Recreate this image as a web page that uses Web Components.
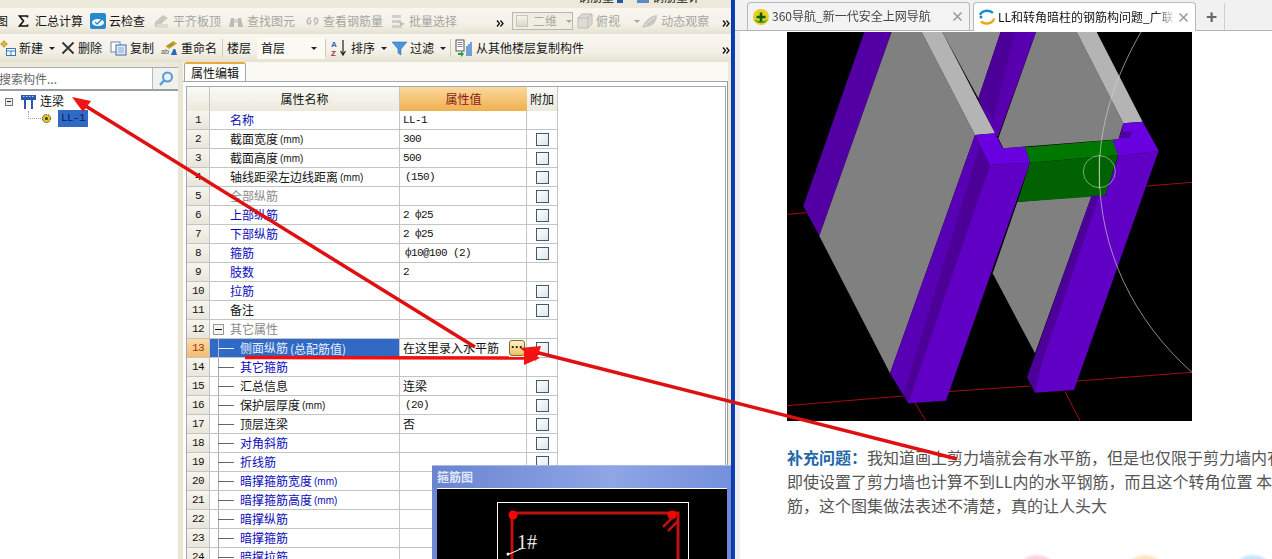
<!DOCTYPE html>
<html lang="zh">
<head>
<meta charset="utf-8">
<title>LL和转角暗柱的钢筋构问题</title>
<style>
  html, body { margin: 0; height: 559px; overflow: hidden; background: #fff; }
  body { font: 12px/1.2 "Noto Sans CJK SC", sans-serif; color: #111; }
</style>
</head>
<body>
<screen-shot>
  <gld-app slot="left">
    <top-strip></top-strip>
    <tool-bar top>
      <tool-item label="图" style="margin-left:-7px"></tool-item>
      <tool-item label="汇总计算" style="margin-left:10px"><svg slot="icon" style="margin-right:3px" width="11" height="12" viewBox="0 0 11 12"><path d="M9.5 2.5V1H1.5L5.5 6 1.5 11H9.5V9.5" fill="none" stroke="#111" stroke-width="1.6"/></svg></tool-item>
      <tool-item label="云检查" style="margin-left:7px"><svg slot="icon" width="16" height="16" viewBox="0 0 16 16"><rect width="16" height="16" rx="2" fill="#2a88cc"/><ellipse cx="8" cy="9.5" rx="6" ry="3.6" fill="#fff"/><path d="M5 9l2.2 2L12 6" fill="none" stroke="#2a88cc" stroke-width="1.4"/></svg></tool-item>
      <tool-item off label="平齐板顶" style="margin-left:9px"><svg slot="icon" width="16" height="16" viewBox="0 0 16 16"><path d="M1 14V9l8-7 5 3-6 5v4z" fill="#c8c8c0"/><path d="M3 15h11V11H3z" fill="#dcdcd4"/></svg></tool-item>
      <tool-item off label="查找图元" style="margin-left:7px"><svg slot="icon" width="16" height="15" viewBox="0 0 16 15"><path d="M1 13l2-9h3v9zM10 13V4h3l2 9z" fill="#bcbcb4"/><rect x="6" y="5" width="4" height="4" fill="#d6d6ce"/></svg></tool-item>
      <tool-item off label="查看钢筋量" style="margin-left:10px"><svg slot="icon" width="15" height="12" viewBox="0 0 15 12"><path d="M6 3C2 2 1 9 4 9c2 0 2-3 1-4M9 9c4 1 5-6 2-6-2 0-2 3-1 4" fill="none" stroke="#bcbcb4" stroke-width="1.6"/></svg></tool-item>
      <tool-item off label="批量选择" style="margin-left:8px"><svg slot="icon" width="15" height="15" viewBox="0 0 15 15"><rect x="1" y="1" width="9" height="3" fill="#d0d0c8"/><rect x="1" y="6" width="9" height="3" fill="#d0d0c8"/><rect x="1" y="11" width="9" height="3" fill="#d0d0c8"/><path d="M8 7l6 3-3 1-1 3z" fill="#bcbcb4"/></svg></tool-item>
      <more-mark style="margin-left:39px"></more-mark>
      <view-combo style="margin-left:8px"></view-combo>
      <tool-item off label="俯视" style="margin-left:4px"><svg slot="icon" width="16" height="16" viewBox="0 0 16 16"><path d="M1 5l4-4h10v10l-4 4H1z" fill="#dcdcd4" stroke="#bcbcb4"/><path d="M1 5h10v10M11 5l4-4" fill="none" stroke="#bcbcb4"/></svg></tool-item>
      <tool-item off drop label="" style="margin-left:5px"></tool-item>
      <tool-item off label="动态观察" style="margin-left:1px"><svg slot="icon" width="17" height="15" viewBox="0 0 17 15"><path d="M1 14C3 8 8 2 16 1c0 7-5 12-11 12z" fill="#c8c8c0"/><path d="M4 12c3-4 6-7 10-9" stroke="#ecebe2" fill="none"/></svg></tool-item>
      <more-mark style="margin-left:13px"></more-mark>
    </tool-bar>
    <tool-bar tall>
      <tool-item drop label="新建" style="margin-left:0"><svg slot="icon" width="16" height="16" viewBox="0 0 16 16"><path d="M3 1h2v2h2v2H5v2H3V5H1V3h2z" fill="#e8b820" stroke="#a88010" stroke-width=".5"/><rect x="6.500" y="8.500" width="9" height="7" fill="#fff" stroke="#3a78b8"/><path d="M6.500 11h9M11 11v4.500" stroke="#3a78b8"/></svg></tool-item>
      <tool-item label="删除" style="margin-left:6px"><svg slot="icon" width="14" height="14" viewBox="0 0 14 14"><path d="M1.500 1.500l11 11M12.500 1.500l-11 11" stroke="#333" stroke-width="1.800"/></svg></tool-item>
      <tool-item label="复制" style="margin-left:8px"><svg slot="icon" width="17" height="15" viewBox="0 0 17 15"><rect x="1" y="1" width="9" height="10" fill="#fff" stroke="#6a86a8"/><rect x="6" y="4" width="10" height="10" fill="#e4eefa" stroke="#3a68a8"/><path d="M8 7h6M8 9h6M8 11h6" stroke="#8aa4c4"/></svg></tool-item>
      <tool-item label="重命名" style="margin-left:7px"><svg slot="icon" width="17" height="16" viewBox="0 0 19 18"><path d="M5 7l9-6 4 3-9 6z" fill="#d8a830"/><path d="M7 7l6-4M9 8l6-4" stroke="#6a8a30"/><path d="M11 17l3-7h2l2 7z" fill="#2a68b8"/><text x="0" y="16" font-size="8" font-family="Liberation Sans" fill="#555">ab</text></svg></tool-item>
      <tool-sep style="margin-left:5px"></tool-sep>
      <tool-item label="楼层" style="margin-left:1px"></tool-item>
      <floor-select style="margin-left:6px"></floor-select>
      <tool-sep style="margin-left:0"></tool-sep>
      <tool-item drop label="排序" style="margin-left:5px"><svg slot="icon" width="17" height="18" viewBox="0 0 17 18"><text x="0" y="8" font-size="8" font-family="Liberation Sans" font-weight="bold" fill="#2a68b8">A</text><text x="0" y="17" font-size="8" font-family="Liberation Sans" font-weight="bold" fill="#a83040">Z</text><path d="M12 1v14M9.500 12l2.500 4 2.500-4" fill="none" stroke="#222" stroke-width="1.200"/></svg></tool-item>
      <tool-item drop label="过滤" style="margin-left:5px"><svg slot="icon" width="15" height="15" viewBox="0 0 15 15"><path d="M0 1h15L9 8v6L6 12V8z" fill="#4a94dc" stroke="#2a68a8" stroke-width=".5"/></svg></tool-item>
      <tool-sep style="margin-left:4px"></tool-sep>
      <tool-item label="从其他楼层复制构件" style="margin-left:4px"><svg slot="icon" width="18" height="18" viewBox="0 0 18 18"><rect x="1" y="1" width="8" height="11" fill="#fff" stroke="#555"/><path d="M2.500 3.500h5M2.500 5.500h5M2.500 7.500h5" stroke="#888"/><path d="M3 14h3v-2l3 3-3 3v-2H3z" fill="#2a9a40"/><path d="M12 7v10M14 5v12M16 3v14" stroke="#2a78c8" stroke-width="1.300"/></svg></tool-item>
      <more-mark style="margin-left:auto;margin-right:1px"></more-mark>
    </tool-bar>
    <work-area>
      <tree-pane slot="side"></tree-pane>
      <prop-panel slot="main">
        <prop-row n="1" kind="link" name="名称" value="LL-1" nobox></prop-row>
        <prop-row n="2" name="截面宽度" unit="(mm)" value="300"></prop-row>
        <prop-row n="3" name="截面高度" unit="(mm)" value="500"></prop-row>
        <prop-row n="4" name="轴线距梁左边线距离" unit="(mm)" value=" (150)"></prop-row>
        <prop-row n="5" kind="mute" name="全部纵筋"></prop-row>
        <prop-row n="6" kind="link" name="上部纵筋" value="2 ф25"></prop-row>
        <prop-row n="7" kind="link" name="下部纵筋" value="2 ф25"></prop-row>
        <prop-row n="8" kind="link" name="箍筋" value=" ф10@100 (2)"></prop-row>
        <prop-row n="9" kind="link" name="肢数" value="2" nobox></prop-row>
        <prop-row n="10" kind="link" name="拉筋"></prop-row>
        <prop-row n="11" name="备注"></prop-row>
        <prop-row n="12" kind="mute" name="其它属性" group nobox></prop-row>
        <prop-row n="13" child selected name="侧面纵筋" unit="(总配筋值)" value="在这里录入水平筋"></prop-row>
        <prop-row n="14" child kind="link" name="其它箍筋" nobox></prop-row>
        <prop-row n="15" child name="汇总信息" value="连梁"></prop-row>
        <prop-row n="16" child name="保护层厚度" unit="(mm)" value=" (20)"></prop-row>
        <prop-row n="17" child name="顶层连梁" value="否"></prop-row>
        <prop-row n="18" child kind="link" name="对角斜筋"></prop-row>
        <prop-row n="19" child kind="link" name="折线筋"></prop-row>
        <prop-row n="20" child kind="link" name="暗撑箍筋宽度" unit="(mm)" nobox></prop-row>
        <prop-row n="21" child kind="link" name="暗撑箍筋高度" unit="(mm)" nobox></prop-row>
        <prop-row n="22" child kind="link" name="暗撑纵筋" nobox></prop-row>
        <prop-row n="23" child kind="link" name="暗撑箍筋" nobox></prop-row>
        <prop-row n="24" child kind="link" name="暗撑拉筋" nobox></prop-row>
      </prop-panel>
    </work-area>
    <rebar-dialog></rebar-dialog>
  </gld-app>
  <browser-pane slot="right">
    <browser-tab slot="tabs" label="360导航_新一代安全上网导航" kind="plus"></browser-tab>
    <browser-tab slot="tabs" label="LL和转角暗柱的钢筋构问题_广联" kind="swirl" active></browser-tab>
    <cad-view></cad-view>
    <question-text></question-text>
    <deco-dots></deco-dots>
  </browser-pane>
  <note-arrows slot="over"></note-arrows>
</screen-shot>

<script>
class ScreenShot extends HTMLElement {
  constructor() {
    super();
    this.attachShadow({mode: 'open'}).innerHTML = `
      <style>
        :host { display: flex; position: relative; width: 1272px; height: 559px; overflow: hidden; }
        #left { display: block; width: 731px; flex: none; }
        #bar { width: 4px; flex: none; background: linear-gradient(90deg, #0a34a8, #0b46c4); }
      </style>
      <div id="left"><slot name="left"></slot></div>
      <div id="bar"></div>
      <slot name="right"></slot>
      <slot name="over"></slot>`;
  }
}

class GldApp extends HTMLElement {
  constructor() {
    super();
    this.attachShadow({mode: 'open'}).innerHTML = `
      <style>
        :host { display: flex; flex-direction: column; position: relative; width: 731px; height: 559px; overflow: hidden; background: #ece9d8; }
      </style>
      <slot></slot>`;
  }
}

class TopStrip extends HTMLElement {
  constructor() {
    super();
    this.attachShadow({mode: 'open'}).innerHTML = `
      <style>
        :host { display: flex; height: 8px; flex: none; overflow: hidden; background: #ece9da; color: #222; }
        span { display: block; margin-top: -11px; line-height: 16px; white-space: nowrap; }
        i { width: 8px; height: 3px; background: #2a58a8; display: block; }
      </style>
      <span style="margin-left:578px">钢筋量</span>
      <i style="margin-left:3px;width:6px"></i>
      <i style="margin-left:14px;width:12px;background:#5a88c8"></i>
      <span style="margin-left:3px">钢筋量计</span>`;
  }
}

class ToolBar extends HTMLElement {
  constructor() {
    super();
    this.attachShadow({mode: 'open'}).innerHTML = `
      <style>
        :host { display: flex; align-items: center; height: 26px; flex: none; white-space: nowrap;
                background: linear-gradient(#f8f6ef, #f3f1e8 60%, #e6e2d2); color: #111; }
        :host([tall]) { height: 28px; }
      </style>
      <slot></slot>`;
  }
}

class ToolItem extends HTMLElement {
  constructor() {
    super();
    const off = this.hasAttribute('off');
    this.attachShadow({mode: 'open'}).innerHTML = `
      <style>
        :host { display: flex; align-items: center; gap: 3px; color: ${off ? '#a6a69e' : '#151515'}; }
        i { border: 3px solid transparent; border-top: 3px solid ${off ? '#a6a69e' : '#222'}; border-bottom: 0; margin-left: 3px; }
        slot { display: flex; }
      </style>
      <slot name="icon"></slot>
      <span>${this.getAttribute('label') || ''}</span>
      ${this.hasAttribute('drop') ? '<i></i>' : ''}`;
  }
}

class ToolSep extends HTMLElement {
  constructor() {
    super();
    this.attachShadow({mode: 'open'}).innerHTML = `
      <style>:host { display: block; width: 1px; height: 18px; background: #cfcbb8; }</style>`;
  }
}

class MoreMark extends HTMLElement {
  constructor() {
    super();
    this.attachShadow({mode: 'open'}).innerHTML = `
      <style>:host { display: block; width: 8px; height: 7px; margin-top: -6px; }</style>
      <svg width="8" height="7" viewBox="0 0 8 7"><path d="M1 .5L3.500 3.500 1 6.500M4.500 .5L7 3.500 4.500 6.500" fill="none" stroke="#111" stroke-width="1.300"/></svg>`;
  }
}

class ViewCombo extends HTMLElement {
  constructor() {
    super();
    this.attachShadow({mode: 'open'}).innerHTML = `
      <style>
        :host { display: flex; align-items: center; width: 61px; height: 18px; box-sizing: border-box; border: 1px solid #b8b8ae; color: #aaa9a0; background: #f0eee4; }
        b { width: 13px; height: 10px; margin: 0 5px 0 3px; background: linear-gradient(#f4f4ec, #d8d8cc); border: 1px solid #c8c8bc; }
        i { margin-left: 9px; border: 3px solid transparent; border-top-color: #a6a69e; border-bottom: 0; }
      </style>
      <b></b><span>二维</span><i></i>`;
  }
}

class FloorSelect extends HTMLElement {
  constructor() {
    super();
    this.attachShadow({mode: 'open'}).innerHTML = `
      <style>
        :host { display: flex; align-items: center; width: 68px; height: 22px; box-sizing: border-box; padding: 0 8px 0 4px; background: #faf9f4; justify-content: space-between; }
        i { border: 3px solid transparent; border-top-color: #222; border-bottom: 0; }
      </style>
      <span>首层</span><i></i>`;
  }
}

class WorkArea extends HTMLElement {
  constructor() {
    super();
    this.attachShadow({mode: 'open'}).innerHTML = `
      <style>
        :host { display: flex; flex: 1; min-height: 0; }
        #gap { width: 5px; flex: none; background: #e9e6d6; }
      </style>
      <slot name="side"></slot><div id="gap"></div><slot name="main"></slot>`;
  }
}

class TreePane extends HTMLElement {
  constructor() {
    super();
    this.attachShadow({mode: 'open'}).innerHTML = `
      <style>
        :host { display: block; width: 178px; flex: none; background: #fff; padding-top: 5px; box-sizing: border-box; background-clip: content-box; }
        #search { display: flex; height: 24px; border-top: 1px solid #aab; border-bottom: 2px solid #9aa0a8; box-sizing: border-box; }
        #search span { flex: 1; color: #666; line-height: 21px; margin-left: -1px; border-right: 1px solid #b4b8c0; }
        #search b { width: 25px; display: flex; align-items: center; justify-content: center; background: #f2f2ec; }
        ul { list-style: none; margin: 0; padding: 0; }
        li { display: flex; align-items: center; height: 17px; }
        #top { padding: 2px 0 0 5px; gap: 0; }
        #box { width: 8px; height: 8px; border: 1px solid #777; box-sizing: border-box; display: flex; align-items: center; justify-content: center; background: #eee; }
        #box::after { content: ""; width: 4px; height: 1px; background: #222; }
        #leaf { padding-left: 28px; }
        #dots { width: 12px; height: 7px; border: 0 dotted #999; border-width: 0 0 1px 1px; margin-top: -8px; }
        #sel { background: #316ac5; color: #0a1a60; font: 11px "Liberation Mono", monospace; letter-spacing: -.6px; width: 30px; height: 17px; line-height: 17px; padding-left: 3px; box-sizing: border-box; margin-left: 6px; }
      </style>
      <div id="search"><span>搜索构件...</span><b><svg width="16" height="16" viewBox="0 0 16 16"><circle cx="9.500" cy="6" r="4.500" fill="#e4f0fa" stroke="#5a9ad0" stroke-width="2"/><path d="M6 9.500L2 14" stroke="#5a9ad0" stroke-width="2.400"/></svg></b></div>
      <ul>
        <li id="top"><span id="box"></span>
          <svg style="margin-left:8px" width="15" height="14" viewBox="0 0 15 14"><rect width="15" height="5" fill="#2a58b0"/><path d="M2 1.500h11" stroke="#bcd" stroke-dasharray="1.500 1.500"/><path d="M4 5v9M11 5v9" stroke="#2a58b0" stroke-width="2"/></svg>
          <span style="margin-left:4px">连梁</span></li>
        <li id="leaf"><span id="dots"></span>
          <svg width="11" height="11" viewBox="0 0 11 11" style="margin-left:0"><circle cx="5.500" cy="5.500" r="4" fill="#e4c820" stroke="#333" stroke-dasharray="1.500 1"/><circle cx="5.500" cy="5.500" r="1.500" fill="#333"/></svg>
          <span id="sel">LL-1</span></li>
      </ul>`;
  }
}

class PropPanel extends HTMLElement {
  constructor() {
    super();
    this.attachShadow({mode: 'open'}).innerHTML = `
      <style>
        :host { display: flex; flex-direction: column; width: 545px; flex: none; min-height: 0; }
        #tabs { height: 19px; flex: none; padding-left: 1px; display: flex; background: #faf9f4; }
        #tab { width: 62px; height: 20px; box-sizing: border-box; text-align: center; line-height: 18px; background: #fff; border: 1px solid #a8a8a0; border-bottom: 0; border-top: 2px solid #e8a840; border-radius: 3px 3px 0 0; }
        #page { flex: 1; min-height: 0; background: #fff; border-top: 1px solid #a0a4a8; border-right: 1px solid #9a9a9a; padding: 4px 1px 0 3px; }
        #grid { height: 100%; border: 1px solid #a0a8b4; border-bottom: 0; }
        #head { display: grid; grid-template-columns: 23px 190px 127px 31px; height: 24px; line-height: 23px; text-align: center; }
        #head div { border-right: 1px solid #c4c4c4; box-sizing: border-box; background: linear-gradient(#fafaf6, #ece9dc); }
        #head .on { background: linear-gradient(#fbd89c, #f0b050); color: #8a1a1a; border: 0; }
        #rows { width: 371px; }
      </style>
      <div id="tabs"><div id="tab">属性编辑</div></div>
      <div id="page"><div id="grid">
        <div id="head" style="width:371px"><div></div><div>属性名称</div><div class="on">属性值</div><div>附加</div></div>
        <div id="rows"><slot></slot></div>
      </div></div>`;
  }
}

class PropRow extends HTMLElement {
  constructor() {
    super();
    const sel = this.hasAttribute('selected');
    const child = this.hasAttribute('child');
    const group = this.hasAttribute('group');
    const kind = this.getAttribute('kind');
    const colour = sel ? '#e8eefc' : kind === 'link' ? '#0a0ab8' : kind === 'mute' ? '#8a8a8a' : '#141414';
    const unit = this.getAttribute('unit');
    const raw = this.getAttribute('value') || '';
    const value = raw.trim();
    const cjk = /[\u4e00-\u9fff]/.test(value);
    const unitCjk = unit && /[\u4e00-\u9fff]/.test(unit);
    this.attachShadow({mode: 'open'}).innerHTML = `
      <style>
        :host { display: grid; grid-template-columns: 23px 190px 127px 31px; height: 19px; line-height: 18px; }
        div { box-sizing: border-box; border-bottom: 1px solid #c4c4c4; border-right: 1px solid #c4c4c4; white-space: pre; overflow: hidden; }
        #n { font: 11px/18px "Liberation Mono", monospace; letter-spacing: -.6px; text-align: center; background: ${sel ? 'linear-gradient(#fcdca4,#f4bc70)' : 'linear-gradient(#f6f5ee,#e8e6da)'}; color: ${sel ? '#a03010' : '#111'}; }
        #name { display: flex; align-items: center; color: ${colour}; background: ${sel ? '#316ac5' : '#fff'}; padding-left: ${child ? 30 : 20}px; position: relative; }
        #name small { font: ${unitCjk ? '12px "Noto Sans CJK SC", sans-serif' : '10px "Liberation Sans", sans-serif'}; margin-left: 2px; }
        #tick { position: absolute; left: 8px; top: 0; bottom: -1px; width: 16px; }
        #tick::before { content: ""; position: absolute; left: 0; top: 0; bottom: 0; width: 1px; background: ${sel ? '#a0b8e8' : '#aaa'}; }
        #tick::after { content: ""; position: absolute; left: 0; right: 0; top: 9px; height: 1px; background: ${sel ? '#e8eefc' : '#666'}; }
        #minus { position: absolute; left: 3px; top: 4px; width: 11px; height: 11px; box-sizing: border-box; border: 1px solid #999; background: #f4f4f0; display: flex; align-items: center; justify-content: center; }
        #minus::after { content: ""; width: 7px; height: 1px; background: #111; }
        #val { padding-left: ${raw !== value ? 5 : 3}px; color: #111; display: flex; align-items: center; justify-content: space-between; }
        #val span { ${cjk ? '' : 'font: 11px/18px "Liberation Mono", monospace; letter-spacing: -.6px;'} }
        #dots { width: 16px; height: 16px; margin-right: 1px; box-sizing: border-box; border: 1px solid #8a6a20; border-radius: 3px; background: linear-gradient(#fff2c8, #f0c060); font: bold 12px/13px "Liberation Sans", sans-serif; text-align: center; color: #111; }
        #add { display: flex; align-items: center; justify-content: center; background: #fff; }
        #add i { display: block; width: 13px; height: 13px; box-sizing: border-box; border: 1px solid #3e5c72; background: linear-gradient(135deg, #fff, #dfe6e6); }
      </style>
      <div id="n">${this.getAttribute('n')}</div>
      <div id="name">
        ${child ? '<span id="tick"></span>' : ''}
        ${group ? '<span id="minus"></span>' : ''}
        <span>${this.getAttribute('name')}</span>${unit ? `<small>${unit}</small>` : ''}
      </div>
      <div id="val"><span>${value}</span>${sel ? '<b id="dots">···</b>' : ''}</div>
      <div id="add">${this.hasAttribute('nobox') ? '' : '<i></i>'}</div>`;
  }
}

class RebarDialog extends HTMLElement {
  constructor() {
    super();
    this.attachShadow({mode: 'open'}).innerHTML = `
      <style>
        :host { display: block; position: absolute; left: 432px; top: 465px; width: 299px; height: 94px; box-sizing: border-box;
                padding: 0 4px 0 5px; background: #7088d4; border-top: 1px solid #a8b8e8; }
        #title { height: 22px; line-height: 22px; font-weight: bold; color: #dfe6f8; background: linear-gradient(90deg, #6a84d0, #8ea6e6 60%, #7490dc); margin: 0 -4px 0 -5px; padding-left: 5px; }
        svg { display: block; background: #000; border-top: 1px solid #fff; }
      </style>
      <div id="title">箍筋图</div>
      <svg width="290" height="71" viewBox="0 0 290 71">
        <rect x="60.500" y="13.500" width="191" height="70" fill="none" stroke="#fff"/>
        <path d="M75 24H241V80M75 24V80" fill="none" stroke="#c01010" stroke-width="3"/>
        <circle cx="76" cy="26" r="4.500" fill="#f00"/><circle cx="235" cy="26" r="4.500" fill="#f00"/>
        <path d="M226 38l10-10M231 42l10-10" stroke="#c01010" stroke-width="2.500"/>
        <path d="M70 66l16-7" stroke="#fff"/><circle cx="71" cy="65" r="1.500" fill="#fff"/>
        <text x="80" y="60" fill="#e8e8e8" font-family="Liberation Serif" font-size="20">1#</text>
      </svg>`;
  }
}

class BrowserPane extends HTMLElement {
  constructor() {
    super();
    this.attachShadow({mode: 'open'}).innerHTML = `
      <style>
        :host { display: flex; flex-direction: column; flex: 1; min-width: 0; background: #fff; }
        #strip { display: flex; align-items: flex-end; height: 31px; flex: none; box-sizing: border-box; padding-left: 12px; gap: 3px; background: #f1f1f1; border-bottom: 1px solid #b4b4b4; }
        #plus { display: flex; align-items: center; justify-content: center; width: 25px; height: 27px; font: bold 19px/1 "Liberation Sans", sans-serif; color: #666; border-right: 1px solid #d0d0d0; }
        #page { flex: 1; min-height: 0; overflow: hidden; padding: 1px 0 0 47px; border-left: 5px solid #efefef; box-sizing: border-box; width: 537px; }
      </style>
      <div id="strip"><slot name="tabs"></slot><div id="plus">+</div></div>
      <div id="page"><slot></slot></div>`;
  }
}

class BrowserTab extends HTMLElement {
  constructor() {
    super();
    const active = this.hasAttribute('active');
    const icon = this.getAttribute('kind') === 'plus'
      ? `<svg width="16" height="16" viewBox="0 0 16 16"><circle cx="8" cy="8" r="8" fill="#e8d020"/><path d="M1 10a8 8 0 0 0 14 0c-3 3-10 3-14 0z" fill="#3a9a28"/><path d="M8 3.500v9M3.500 8h9" stroke="#0e5a10" stroke-width="2.600"/></svg>`
      : `<svg width="16" height="16" viewBox="0 0 16 16"><path d="M1 6a7.500 6 0 0 1 13-2" fill="none" stroke="#1a88d0" stroke-width="2.400"/><path d="M15 9.500a7.500 6 0 0 1-13 3" fill="none" stroke="#e8a820" stroke-width="2.400"/><circle cx="2" cy="8" r="1.500" fill="#1a88d0"/></svg>`;
    this.attachShadow({mode: 'open'}).innerHTML = `
      <style>
        :host { display: flex; align-items: center; width: 223px; box-sizing: border-box; padding: 0 7px 0 5px; gap: 3px;
                border: 1px solid #b8b8b8; border-bottom: 0; border-radius: 4px 4px 0 0; margin-bottom: ${active ? '-1px' : '0'};
                height: ${active ? '29px' : '28px'}; background: ${active ? '#fff' : '#f3f3f3'}; color: ${active ? '#111' : '#444'}; }
        span { flex: 1; white-space: nowrap; overflow: hidden; font-size: 12px; -webkit-mask-image: linear-gradient(90deg, #000 88%, transparent); mask-image: linear-gradient(90deg, #000 88%, transparent); }
        svg { flex: none; }
      </style>
      ${icon}<span>${this.getAttribute('label')}</span>
      <svg width="9" height="9" viewBox="0 0 9 9"><path d="M.5 .5l8 8M8.500 .5l-8 8" stroke="#999" stroke-width="1.500"/></svg>`;
  }
}

class CadView extends HTMLElement {
  constructor() {
    super();
    this.attachShadow({mode: 'open'}).innerHTML = `
      <style>:host { display: block; width: 405px; height: 389px; } svg { display: block; background: #000; }</style>
      <svg width="405" height="389" viewBox="21 6 1215 1167">
        <g stroke="#c81010" stroke-width="2.500" fill="none">
          <path d="M21 553L80 548M1100 468L1236 457M21 1127L370 1098M500 1085L750 1068M890 1053L1236 1027M405 1118L437 1172M855 1085L900 1172"/>
        </g>
        <polygon points="487,6 662,6 595,205" fill="#8c8c8c"/>
        <polygon points="768,6 890,6 1030,280 1015,328 670,355 655,325" fill="#808080"/>
        <polygon points="712,516 935,497 765,970 638,730" fill="#808080"/>
        <polygon points="662,6 768,6 655,318 648,318 595,208" fill="#5800b0"/>
        <polygon points="662,6 705,6 640,270 595,208" fill="#4c0098"/>
        <polygon points="890,6 950,6 1088,275 1030,280" fill="#b4b4b4"/>
        <polygon points="253,6 335,6 118,618 70,528" fill="#5200a4"/>
        <polygon points="335,6 425,6 585,315 330,1030 118,618" fill="#808080"/>
        <polygon points="425,6 487,6 645,310 585,315" fill="#b4b4b4"/>
        <polygon points="735,352 998,330 1015,375 750,398" fill="#007800"/>
        <polygon points="750,398 1015,375 975,497 712,516" fill="#006200"/>
        <polygon points="1015,378 1136,362 882,1080 765,1088 742,1042 935,497 975,497" fill="#6000c4"/>
        <polygon points="935,497 958,497 785,1000 765,1088 742,1042" fill="#4c0098"/>
        <polygon points="1030,280 1088,275 1136,362 1015,378 998,330 1015,328 1025,305" fill="#6800e0"/>
        <polygon points="1020,325 1050,322 1055,305 1027,305" fill="#4c0098"/>
        <polygon points="585,315 630,405 385,1120 330,1030" fill="#5800b4"/>
        <polygon points="600,345 630,405 395,1118 385,1120 370,1095" fill="#4c0098"/>
        <polygon points="630,405 750,398 498,1112 385,1120" fill="#6000c4"/>
        <polygon points="585,315 645,310 668,355 735,350 750,398 630,405" fill="#6800e0"/>
        <g fill="none">
          <path d="M1083 6C1000 150 958 290 958 425C958 660 1060 870 1236 1027" stroke="#d0d0d0" stroke-width="2"/>
          <circle cx="958" cy="425" r="48" stroke="#a8d8a0" stroke-width="2"/>
          <path d="M958 375V475" stroke="#c8e0c0" stroke-width="2"/>
        </g>
      </svg>`;
  }
}

class QuestionText extends HTMLElement {
  constructor() {
    super();
    this.attachShadow({mode: 'open'}).innerHTML = `
      <style>
        :host { display: block; margin-top: 24px; font-size: 16px; line-height: 24px; color: #555; white-space: nowrap; width: 485px; overflow: hidden; }
        b { color: #2268a8; }
        p { margin: 0; }
      </style>
      <p><b>补充问题：</b>我知道画上剪力墙就会有水平筋，但是也仅限于剪力墙内有</p>
      <p>即使设置了剪力墙也计算不到LL内的水平钢筋，而且这个转角位置 本</p>
      <p>筋，这个图集做法表述不清楚，真的让人头大</p>`;
  }
}

class DecoDots extends HTMLElement {
  constructor() {
    super();
    this.attachShadow({mode: 'open'}).innerHTML = `
      <style>
        :host { display: flex; gap: 64px; margin: 38px 0 0 228px; width: 300px; }
        i { display: block; flex: none; width: 44px; height: 44px; border-radius: 50%; filter: blur(1px); }
      </style>
      <i style="background:#fbd4dc"></i><i style="background:#fde6c4"></i><i style="background:#c6e6fb"></i>`;
  }
}

class NoteArrows extends HTMLElement {
  constructor() {
    super();
    this.attachShadow({mode: 'open'}).innerHTML = `
      <style>:host { position: absolute; left: 0; top: 0; width: 1272px; height: 559px; pointer-events: none; }</style>
      <svg width="1272" height="559" viewBox="0 0 1272 559" fill="#f01414" stroke="none">
        <path d="M475 347L84 105" stroke="#e01010" stroke-width="3.500"/>
        <polygon points="72,97 91,101 83,112"/>
        <path d="M245 357.500L526 358" stroke="#f01010" stroke-width="3.500"/>
        <polygon points="540,358 524,351 524,365"/>
        <path d="M957 459L535 352" stroke="#e01010" stroke-width="3.500"/>
        <polygon points="520,348 541,346 536,361"/>
      </svg>`;
  }
}

customElements.define('screen-shot', ScreenShot);
customElements.define('gld-app', GldApp);
customElements.define('top-strip', TopStrip);
customElements.define('tool-bar', ToolBar);
customElements.define('tool-item', ToolItem);
customElements.define('tool-sep', ToolSep);
customElements.define('more-mark', MoreMark);
customElements.define('view-combo', ViewCombo);
customElements.define('floor-select', FloorSelect);
customElements.define('work-area', WorkArea);
customElements.define('tree-pane', TreePane);
customElements.define('prop-panel', PropPanel);
customElements.define('prop-row', PropRow);
customElements.define('rebar-dialog', RebarDialog);
customElements.define('browser-pane', BrowserPane);
customElements.define('browser-tab', BrowserTab);
customElements.define('cad-view', CadView);
customElements.define('question-text', QuestionText);
customElements.define('deco-dots', DecoDots);
customElements.define('note-arrows', NoteArrows);
</script>
</body>
</html>
